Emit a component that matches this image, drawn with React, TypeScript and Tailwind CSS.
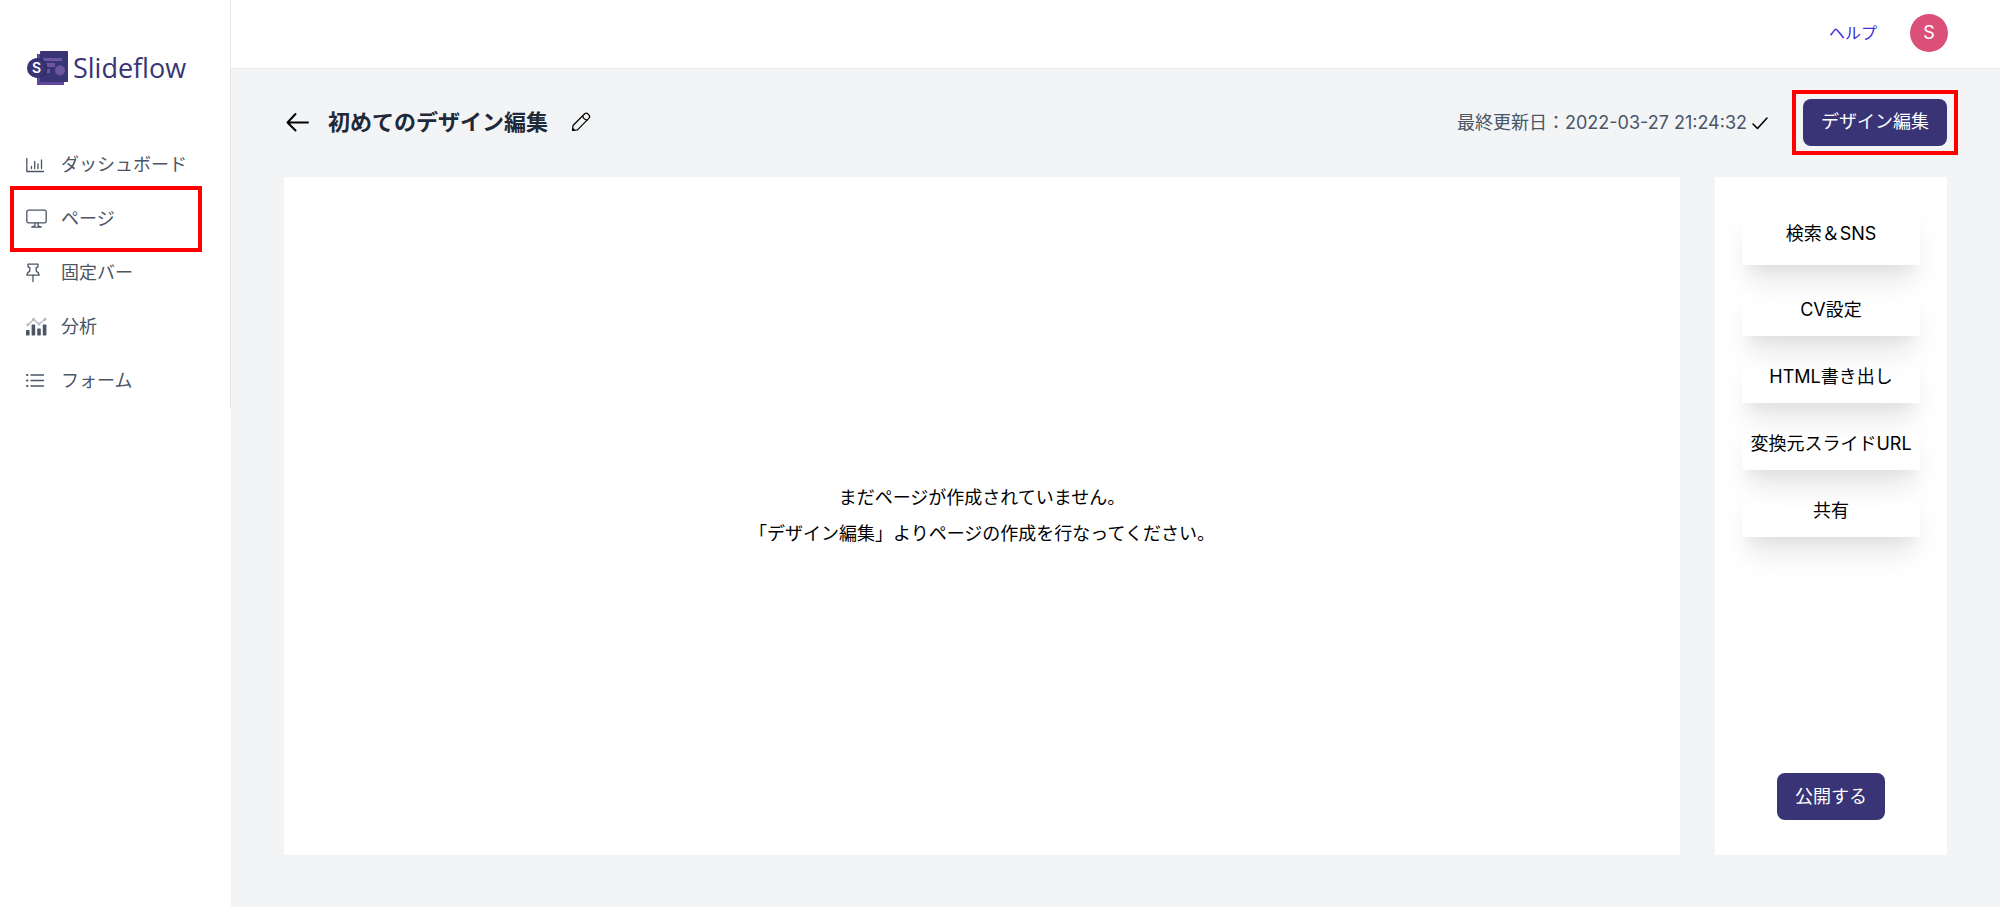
import type { ReactNode } from "react";

const iconProps = {
  fill: "none",
  stroke: "currentColor",
  strokeLinecap: "round",
  strokeLinejoin: "round",
} as const;

const navItems: { label: string; icon: ReactNode; marked?: boolean }[] = [
  {
    label: "ダッシュボード",
    icon: (
      <svg width="20" height="20" viewBox="0 0 20 20" {...iconProps} strokeWidth="1.3">
        <path d="M0.8 3.5V16.500h16.7" />
        <path d="M5.500 13.500v-2M8.700 13.500V6.500M12 13.500V9M15.500 13.500V5" />
      </svg>
    ),
  },
  {
    label: "ページ",
    marked: true,
    icon: (
      <svg width="22" height="20" viewBox="0 0 22 20" {...iconProps} strokeWidth="1.3">
        <rect x="0.8" y="1.2" width="19.4" height="12.6" rx="1.6" />
        <path d="M9 14v2c0 1-1.200 1.500-3 2M12 14v2c0 1 1.200 1.500 3 2M5.800 18.200h9.400" />
      </svg>
    ),
  },
  {
    label: "固定バー",
    icon: (
      <svg width="14" height="20" viewBox="0 0 14 20" {...iconProps} strokeWidth="1.3">
        <path d="M2 1.200h10v2.600l-1.800.8v3.600c1.800.8 2.800 2 3 4H0.800c.2-2 1.200-3.200 3-4V4.600L2 3.800z" />
        <path d="M7 12.400V18.500" />
      </svg>
    ),
  },
  {
    label: "分析",
    icon: (
      <svg width="22" height="20" viewBox="0 0 22 20" fill="currentColor">
        <path d="M2 8 7.500 2.500l5.500 4.500L19 2.500" fill="none" stroke="#b9bcc2" strokeWidth="1.5" />
        <g fill="#b9bcc2">
          <circle cx="1.800" cy="7.800" r="1.500" />
          <circle cx="7.500" cy="2.300" r="1.500" />
          <circle cx="13" cy="7" r="1.500" />
          <circle cx="19" cy="2.300" r="1.500" />
        </g>
        <rect x="0" y="13" width="3.600" height="5.500" rx="0.800" />
        <rect x="5.600" y="7.500" width="3.600" height="11" rx="0.800" />
        <rect x="11.200" y="11.500" width="3.600" height="7" rx="0.800" />
        <rect x="16.800" y="7.500" width="3.600" height="11" rx="0.800" />
      </svg>
    ),
  },
  {
    label: "フォーム",
    icon: (
      <svg width="20" height="20" viewBox="0 0 20 20" {...iconProps} strokeWidth="1.3">
        <path d="M5 4h12.500M5 9.500h12.500M5 15h12.500" />
        <path d="M1 4h.4M1 9.500h.4M1 15h.4" strokeWidth="2" />
      </svg>
    ),
  },
];

function LogoMark() {
  return (
    <svg width="41" height="36" viewBox="0 0 41 36" aria-hidden="true">
      <rect x="10" y="4" width="27" height="31" fill="#5f4699" />
      <rect x="13" y="1" width="28" height="31" rx="1" fill="#383476" />
      <g fill="#6c569f">
        <rect x="16" y="8" width="19" height="3" />
        <rect x="18" y="13" width="10" height="4" />
        <rect x="19" y="19" width="4" height="4" />
        <circle cx="33" cy="20.500" r="5" />
      </g>
      <circle cx="10.500" cy="18" r="10" fill="#2e2b66" />
      <circle cx="9.500" cy="18" r="9.500" fill="#383476" />
      <text
        x="9.500"
        y="23"
        fill="#fff"
        textAnchor="middle"
        fontFamily="Inter, sans-serif"
        fontWeight="600"
        fontSize="14"
      >
        S
      </text>
    </svg>
  );
}

function Sidebar() {
  return (
    <aside className="w-[231px] shrink-0 bg-white">
      <div className="border-r border-gray-200">
        <a href="#" className="flex h-[138px] items-center gap-[5px] pb-0.5 pl-[27px] text-[#383476]">
          <LogoMark />
          <span className="font-['Open_Sans',sans-serif] text-[27px] leading-9">Slideflow</span>
        </a>
        <nav>
          {navItems.map((item) => (
            <a
              key={item.label}
              href="#"
              className="relative flex h-[54px] items-center pl-[26px] text-gray-600"
            >
              <span className="w-[35px] shrink-0">{item.icon}</span>
              {item.label}
              {item.marked && (
                <span className="absolute -inset-y-1.5 right-7 left-2.5 border-4 border-[#f00]" />
              )}
            </a>
          ))}
        </nav>
      </div>
    </aside>
  );
}

const panelButton =
  "block w-full text-center whitespace-nowrap cursor-pointer shadow-[0_22px_28px_-6px_rgba(0,0,0,0.1),0_11px_11px_-6px_rgba(0,0,0,0.04)]";

function SettingsPanel() {
  return (
    <section className="flex w-[232px] shrink-0 flex-col items-center bg-white px-[27px] pt-[25px] pb-[35px]">
      <button type="button" className={`${panelButton} mb-[18px] h-[63px]`}>
        検索＆SNS
      </button>
      <div className="flex w-full flex-col gap-[14px]">
        {["CV設定", "HTML書き出し", "変換元スライドURL", "共有"].map((label) => (
          <button key={label} type="button" className={`${panelButton} h-[53px]`}>
            {label}
          </button>
        ))}
      </div>
      <button
        type="button"
        className="mt-auto h-[47px] rounded-lg bg-[#383476] px-[18px] text-white"
      >
        公開する
      </button>
    </section>
  );
}

export default function App() {
  return (
    <div className="flex min-h-screen bg-white font-[Inter,'Noto_Sans_CJK_JP',sans-serif] text-[18px] leading-7 text-black">
      <Sidebar />
      <div className="flex min-w-0 flex-1 flex-col bg-gray-100">
        <header className="flex h-[69px] items-center justify-end gap-[33px] border-b border-gray-200 bg-white pr-[52px] pb-0.5">
          <a href="#" className="text-base text-indigo-700">
            ヘルプ
          </a>
          <button type="button" className="size-[38px] rounded-full bg-[#db5079] text-white">
            S
          </button>
        </header>

        <main className="flex flex-1 flex-col pr-[53px] pb-[52px] pl-[53px]">
          <div className="mb-0.5 flex h-[106px] items-center">
            <a href="#" aria-label="戻る" className="mr-[19px]">
              <svg width="25" height="24" viewBox="0 0 25 24" {...iconProps} strokeWidth="2">
                <path d="M11.500 4 3.500 12.500l8 8M4 12.500h20" />
              </svg>
            </a>
            <h1 className="text-[22px] font-bold text-gray-800">初めてのデザイン編集</h1>
            <button type="button" aria-label="名前を編集" className="ml-[22px]">
              <svg width="22" height="22" viewBox="0 0 22 22" {...iconProps} strokeWidth="1.2">
                <path d="M2.500 19.500l.5-5L14.500 3c1-1 2.500-1 3.500 0l.8.8c1 1 1 2.500 0 3.500L7.500 18.800z" />
                <path d="M12.800 4.800c.2 2.400 1.800 4 4.300 4.300M2.700 17.500l1.800 1.700" />
              </svg>
            </button>

            <p className="ml-auto flex items-center gap-1 pt-0.5 text-gray-600">
              最終更新日：2022-03-27 21:24:32
              <svg
                className="text-black"
                width="18"
                height="18"
                viewBox="0 0 18 18"
                {...iconProps}
                strokeWidth="1.6"
              >
                <path d="M2 10l4.500 4.500L16 4" />
              </svg>
            </p>
            <div className="relative ml-[34px]">
              <button type="button" className="h-[47px] rounded-lg bg-[#383476] px-[18px] text-white">
                デザイン編集
              </button>
              <span className="pointer-events-none absolute -inset-x-[11px] -inset-y-[9px] border-4 border-[#f00]" />
            </div>
          </div>

          <div className="flex flex-1 gap-[35px]">
            <section className="flex flex-1 items-center justify-center bg-white text-center leading-9">
              <p>
                まだページが作成されていません。
                <br />
                「デザイン編集」よりページの作成を行なってください。
              </p>
            </section>
            <SettingsPanel />
          </div>
        </main>
      </div>
    </div>
  );
}
